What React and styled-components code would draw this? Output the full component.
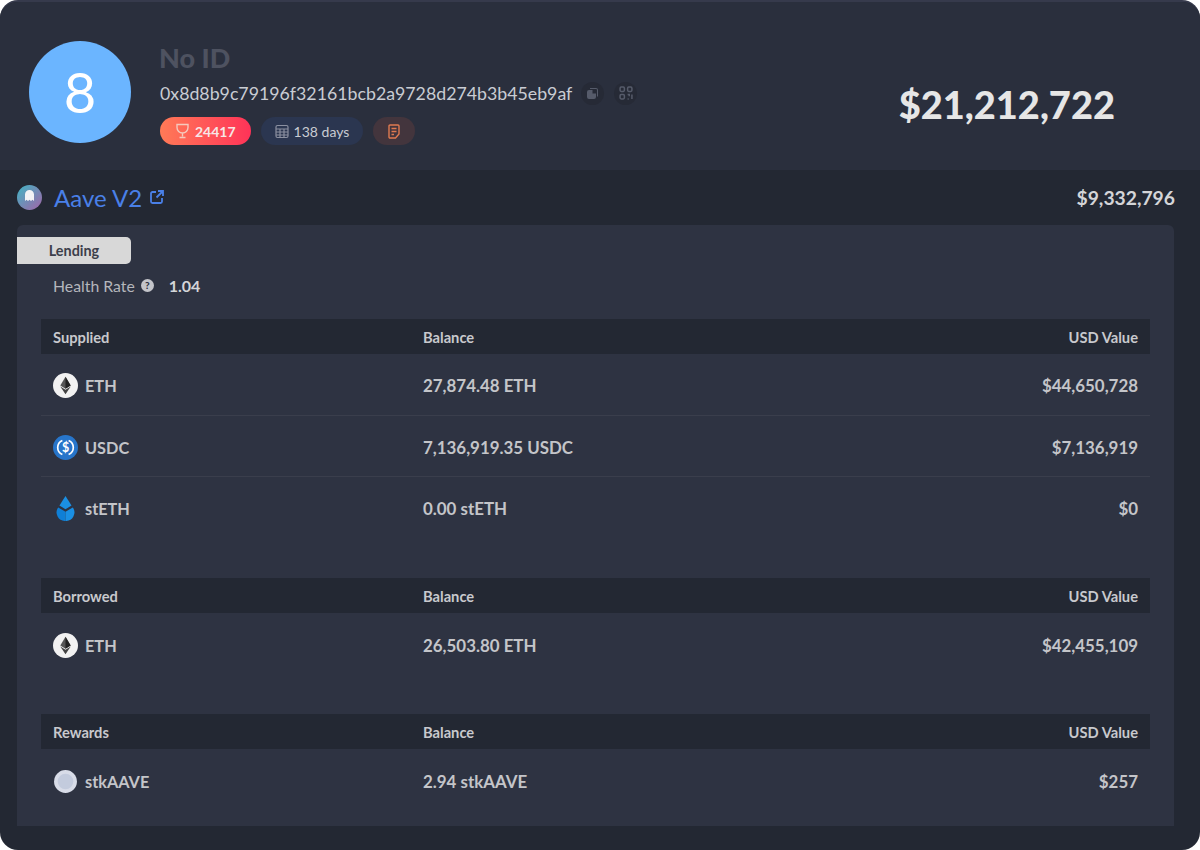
import React from "react";
import styled, { createGlobalStyle } from "styled-components";

const GlobalStyle = createGlobalStyle`
  html, body {
    margin: 0;
    padding: 0;
    background: #ffffff;
    font-family: "Lato", "Liberation Sans", sans-serif;
  }
`;

const Card = styled.div`
  width: 1200px;
  height: 850px;
  box-sizing: border-box;
  border-radius: 18px;
  overflow: hidden;
  background: #232833;
  border-top: 2px solid #363a4c;
`;

const Header = styled.header`
  height: 168px;
  box-sizing: border-box;
  background: #2a2f3d;
  display: flex;
  align-items: flex-start;
  padding: 38px 85px 0 29px;
`;

const Avatar = styled.div`
  width: 102px;
  height: 102px;
  margin-top: 1px;
  border-radius: 50%;
  background: #6bb5ff;
  color: #ffffff;
  font-size: 56px;
  line-height: 102px;
  text-align: center;
  flex: none;
`;

const Identity = styled.div`
  margin-left: 29px;
  flex: 1;
`;

const Name = styled.div`
  height: 36px;
  margin-left: -1px;
  font-size: 27px;
  font-weight: 900;
  line-height: 36px;
  color: #4e5260;
`;

const AddressRow = styled.div`
  display: flex;
  align-items: center;
  height: 34px;
`;

const Address = styled.span`
  font-size: 17.75px;
  color: #c9ccd3;
  margin-right: 9px;
`;

const IconDot = styled.span`
  width: 23px;
  height: 23px;
  border-radius: 50%;
  background: #262a36;
  display: flex;
  align-items: center;
  justify-content: center;
  margin-right: 10px;
`;

const Badges = styled.div`
  display: flex;
  gap: 10px;
  margin-top: 7px;
`;

const Badge = styled.span`
  height: 28px;
  box-sizing: border-box;
  border-radius: 14px;
  padding: 0 ${(p) => p.$pad || 14}px;
  display: inline-flex;
  align-items: center;
  gap: 5px;
  font-size: 14px;
  font-weight: ${(p) => p.$weight || 400};
  color: ${(p) => p.$color};
  background: ${(p) => p.$bg};
`;

const Total = styled.div`
  font-size: 38px;
  font-weight: 900;
  color: #e6e6e6;
  margin-top: 40px;
  line-height: 48px;
`;

const Project = styled.div`
  height: 55px;
  display: flex;
  align-items: center;
  padding: 0 25px 0 17px;
`;

const ProjectLogo = styled.svg`
  width: 25px;
  height: 25px;
  flex: none;
`;

const ProjectName = styled.span`
  margin-left: 12px;
  font-size: 24px;
  color: #4a80e8;
`;

const ProjectLink = styled.svg`
  width: 14px;
  height: 14px;
  margin-left: 8px;
  margin-top: -2px;
`;

const ProjectValue = styled.span`
  margin-left: auto;
  font-size: 19.3px;
  font-weight: 700;
  color: #d4d5d8;
`;

const Panel = styled.section`
  margin: 0 26px 0 17px;
  height: 601px;
  box-sizing: border-box;
  background: #2e3342;
  border-radius: 6px 6px 0 0;
  padding-top: 12px;
`;

const Tag = styled.div`
  width: 114px;
  height: 27px;
  background: #d8d8d8;
  border-radius: 0 5px 5px 0;
  color: #3c3f4b;
  font-size: 14.4px;
  font-weight: 700;
  line-height: 27px;
  text-align: center;
  box-sizing: border-box;
`;

const Health = styled.div`
  display: flex;
  align-items: center;
  height: 44px;
  box-sizing: border-box;
  padding: 0 0 2px 36px;
  font-size: 15.8px;
  color: #b4b6bc;
`;

const HelpMark = styled.span`
  width: 13px;
  height: 13px;
  border-radius: 50%;
  background: #c4c5ca;
  color: #2e3342;
  font-size: 10px;
  font-weight: 900;
  line-height: 13px;
  text-align: center;
  margin: 0 15px 0 6px;
`;

const HealthValue = styled.span`
  font-weight: 700;
  font-size: 16px;
  color: #d4d5d8;
`;

const Table = styled.div`
  margin: ${(p) => p.$top}px 24px 0 24px;
`;

const HeadRow = styled.div`
  display: grid;
  grid-template-columns: 370px 1fr auto;
  align-items: center;
  height: 35px;
  padding: 0 12px;
  background: #232833;
  font-size: 14.7px;
  font-weight: 700;
  color: #c8c9cd;
`;

const Row = styled.div`
  display: grid;
  grid-template-columns: 370px 1fr auto;
  align-items: center;
  height: 61px;
  padding: ${(p) => p.$shift}px 12px 0;
  border-top: ${(p) => (p.$first ? "none" : "1px solid #3a3e4c")};
  box-sizing: border-box;
  font-size: 16.9px;
  font-weight: 700;
  color: #c4c5c9;
`;

const Token = styled.div`
  display: flex;
  align-items: center;
  gap: 7px;
  font-size: 16.3px;
`;

const TokenIcon = styled.svg`
  width: 25px;
  height: 25px;
  flex: none;
`;

const EthIcon = () => (
  <TokenIcon viewBox="0 0 24 24">
    <circle cx="12" cy="12" r="12" fill="#f2f2f2" />
    <path d="M12 3.5 7 12l5 3 5-3z" fill="#555" />
    <path d="M12 3.5V15l5-3z" fill="#222" />
    <path d="M7 13l5 7.5 5-7.5-5 3z" fill="#444" />
  </TokenIcon>
);

const UsdcIcon = () => (
  <TokenIcon viewBox="0 0 24 24">
    <circle cx="12" cy="12" r="12" fill="#2775ca" />
    <path d="M9 5.2a7.4 7.4 0 0 0 0 13.6M15 5.2a7.4 7.4 0 0 1 0 13.6" fill="none" stroke="#fff" strokeWidth="1.6" />
    <text x="12" y="16.5" fontSize="12" fontWeight="700" fill="#fff" textAnchor="middle" fontFamily="Lato">$</text>
  </TokenIcon>
);

const StethIcon = () => (
  <TokenIcon viewBox="0 0 24 24">
    <path d="M12 0 6.2 9.2 12 12.6l5.8-3.4z" fill="#1a8fe3" />
    <path d="M5 11a8.2 8.2 0 0 0 7 13V15.2z" fill="#0f7fd6" />
    <path d="M19 11a8.2 8.2 0 0 1-7 13v-8.8z" fill="#1a8fe3" />
  </TokenIcon>
);

const StkIcon = () => (
  <TokenIcon viewBox="0 0 24 24">
    <circle cx="12" cy="12" r="11" fill="#d8dce8" />
    <circle cx="12" cy="12" r="7.5" fill="#c3cbdd" />
  </TokenIcon>
);

const sections = [
  {
    label: "Supplied",
    top: 11,
    shift: 2,
    rows: [
      { icon: <EthIcon />, name: "ETH", balance: "27,874.48 ETH", usd: "$44,650,728" },
      { icon: <UsdcIcon />, name: "USDC", balance: "7,136,919.35 USDC", usd: "$7,136,919" },
      { icon: <StethIcon />, name: "stETH", balance: "0.00 stETH", usd: "$0" },
    ],
  },
  {
    label: "Borrowed",
    top: 41,
    shift: 4,
    rows: [{ icon: <EthIcon />, name: "ETH", balance: "26,503.80 ETH", usd: "$42,455,109" }],
  },
  {
    label: "Rewards",
    top: 40,
    shift: 4,
    rows: [{ icon: <StkIcon />, name: "stkAAVE", balance: "2.94 stkAAVE", usd: "$257" }],
  },
];

export default function App() {
  return (
    <>
      <GlobalStyle />
      <Card>
        <Header>
          <Avatar>8</Avatar>
          <Identity>
            <Name>No ID</Name>
            <AddressRow>
              <Address>0x8d8b9c79196f32161bcb2a9728d274b3b45eb9af</Address>
              <IconDot>
                <svg width="13" height="13" viewBox="0 0 13 13" fill="#565b6a">
                  <path d="M4 1h6a2 2 0 0 1 2 2v6l-1 1V3a1 1 0 0 0-1-1H4z" />
                  <path d="M3 3h3.5v3.5H10V10a2 2 0 0 1-2 2H3a2 2 0 0 1-2-2V5a2 2 0 0 1 2-2z" />
                </svg>
              </IconDot>
              <IconDot>
                <svg width="14" height="14" viewBox="0 0 13 13" fill="none" stroke="#565b6a" strokeWidth="1.4">
                  <rect x="1" y="1" width="4" height="4" rx="1" />
                  <rect x="8" y="1" width="4" height="4" rx="1" />
                  <rect x="1" y="8" width="4" height="4" rx="1" />
                  <path d="M8 8h1.5v1.5M12 8v4M8 12h1" />
                </svg>
              </IconDot>
            </AddressRow>
            <Badges>
              <Badge $bg="linear-gradient(90deg, #ff7a57, #ff3358)" $color="#f7e6e6" $weight={700} $pad={15}>
                <svg width="15" height="16" viewBox="0 0 15 16" fill="none" stroke="#f5c9bd" strokeWidth="1.4">
                  <path d="M2 1.5h11v3a5.5 5.5 0 0 1-11 0zM7.5 10V13.5M4.5 14.5h6" />
                </svg>
                24417
              </Badge>
              <Badge $bg="#2b3650" $color="#c9ccd3">
                <svg width="14" height="15" viewBox="0 0 14 14" fill="none" stroke="#8b90a0" strokeWidth="1.2">
                  <rect x="1" y="1" width="12" height="12" rx="1.5" />
                  <path d="M1 4.5h12M1 7.5h12M1 10.5h12M5 4.5V13M9 4.5V13" />
                </svg>
                138 days
              </Badge>
              <Badge $bg="#43353d" $color="#e07a50">
                <svg width="14" height="15" viewBox="0 0 14 15" fill="none" stroke="#e07a50" strokeWidth="1.4">
                  <path d="M3 1h8a1 1 0 0 1 1 1v8l-3.5 4H3a1 1 0 0 1-1-1V2a1 1 0 0 1 1-1zM4.5 4.5h5M4.5 7.5h5M4.5 10.5h2.5" />
                </svg>
              </Badge>
            </Badges>
          </Identity>
          <Total>$21,212,722</Total>
        </Header>
        <Project>
          <ProjectLogo viewBox="0 0 25 25">
            <defs>
              <linearGradient id="aaveLogo" x1="0" y1="0" x2="1" y2="1">
                <stop offset="0" stopColor="#3fb5c4" />
                <stop offset="1" stopColor="#a464a8" />
              </linearGradient>
            </defs>
            <circle cx="12.5" cy="12.5" r="12.5" fill="url(#aaveLogo)" />
            <path d="M8 16V9.5a4.5 4.5 0 0 1 9 0V16l-1.5-1.2-1.5 1.2-1.5-1.2-1.5 1.2-1.5-1.2z" fill="#f2f2f5" />
          </ProjectLogo>
          <ProjectName>Aave V2</ProjectName>
          <ProjectLink viewBox="0 0 14 14" fill="none" stroke="#4a80e8" strokeWidth="1.8">
            <path d="M6 2H2.5A1.5 1.5 0 0 0 1 3.5v8A1.5 1.5 0 0 0 2.5 13h8a1.5 1.5 0 0 0 1.5-1.5V8M8 1h5v5M13 1 6.5 7.5" />
          </ProjectLink>
          <ProjectValue>$9,332,796</ProjectValue>
        </Project>
        <Panel>
          <Tag>Lending</Tag>
          <Health>
            Health Rate
            <HelpMark>?</HelpMark>
            <HealthValue>1.04</HealthValue>
          </Health>
          {sections.map((section) => (
            <Table key={section.label} $top={section.top}>
              <HeadRow>
                <span>{section.label}</span>
                <span>Balance</span>
                <span>USD Value</span>
              </HeadRow>
              {section.rows.map((row, i) => (
                <Row key={row.name} $first={i === 0} $shift={section.shift}>
                  <Token>
                    {row.icon}
                    {row.name}
                  </Token>
                  <span>{row.balance}</span>
                  <span>{row.usd}</span>
                </Row>
              ))}
            </Table>
          ))}
        </Panel>
      </Card>
    </>
  );
}
